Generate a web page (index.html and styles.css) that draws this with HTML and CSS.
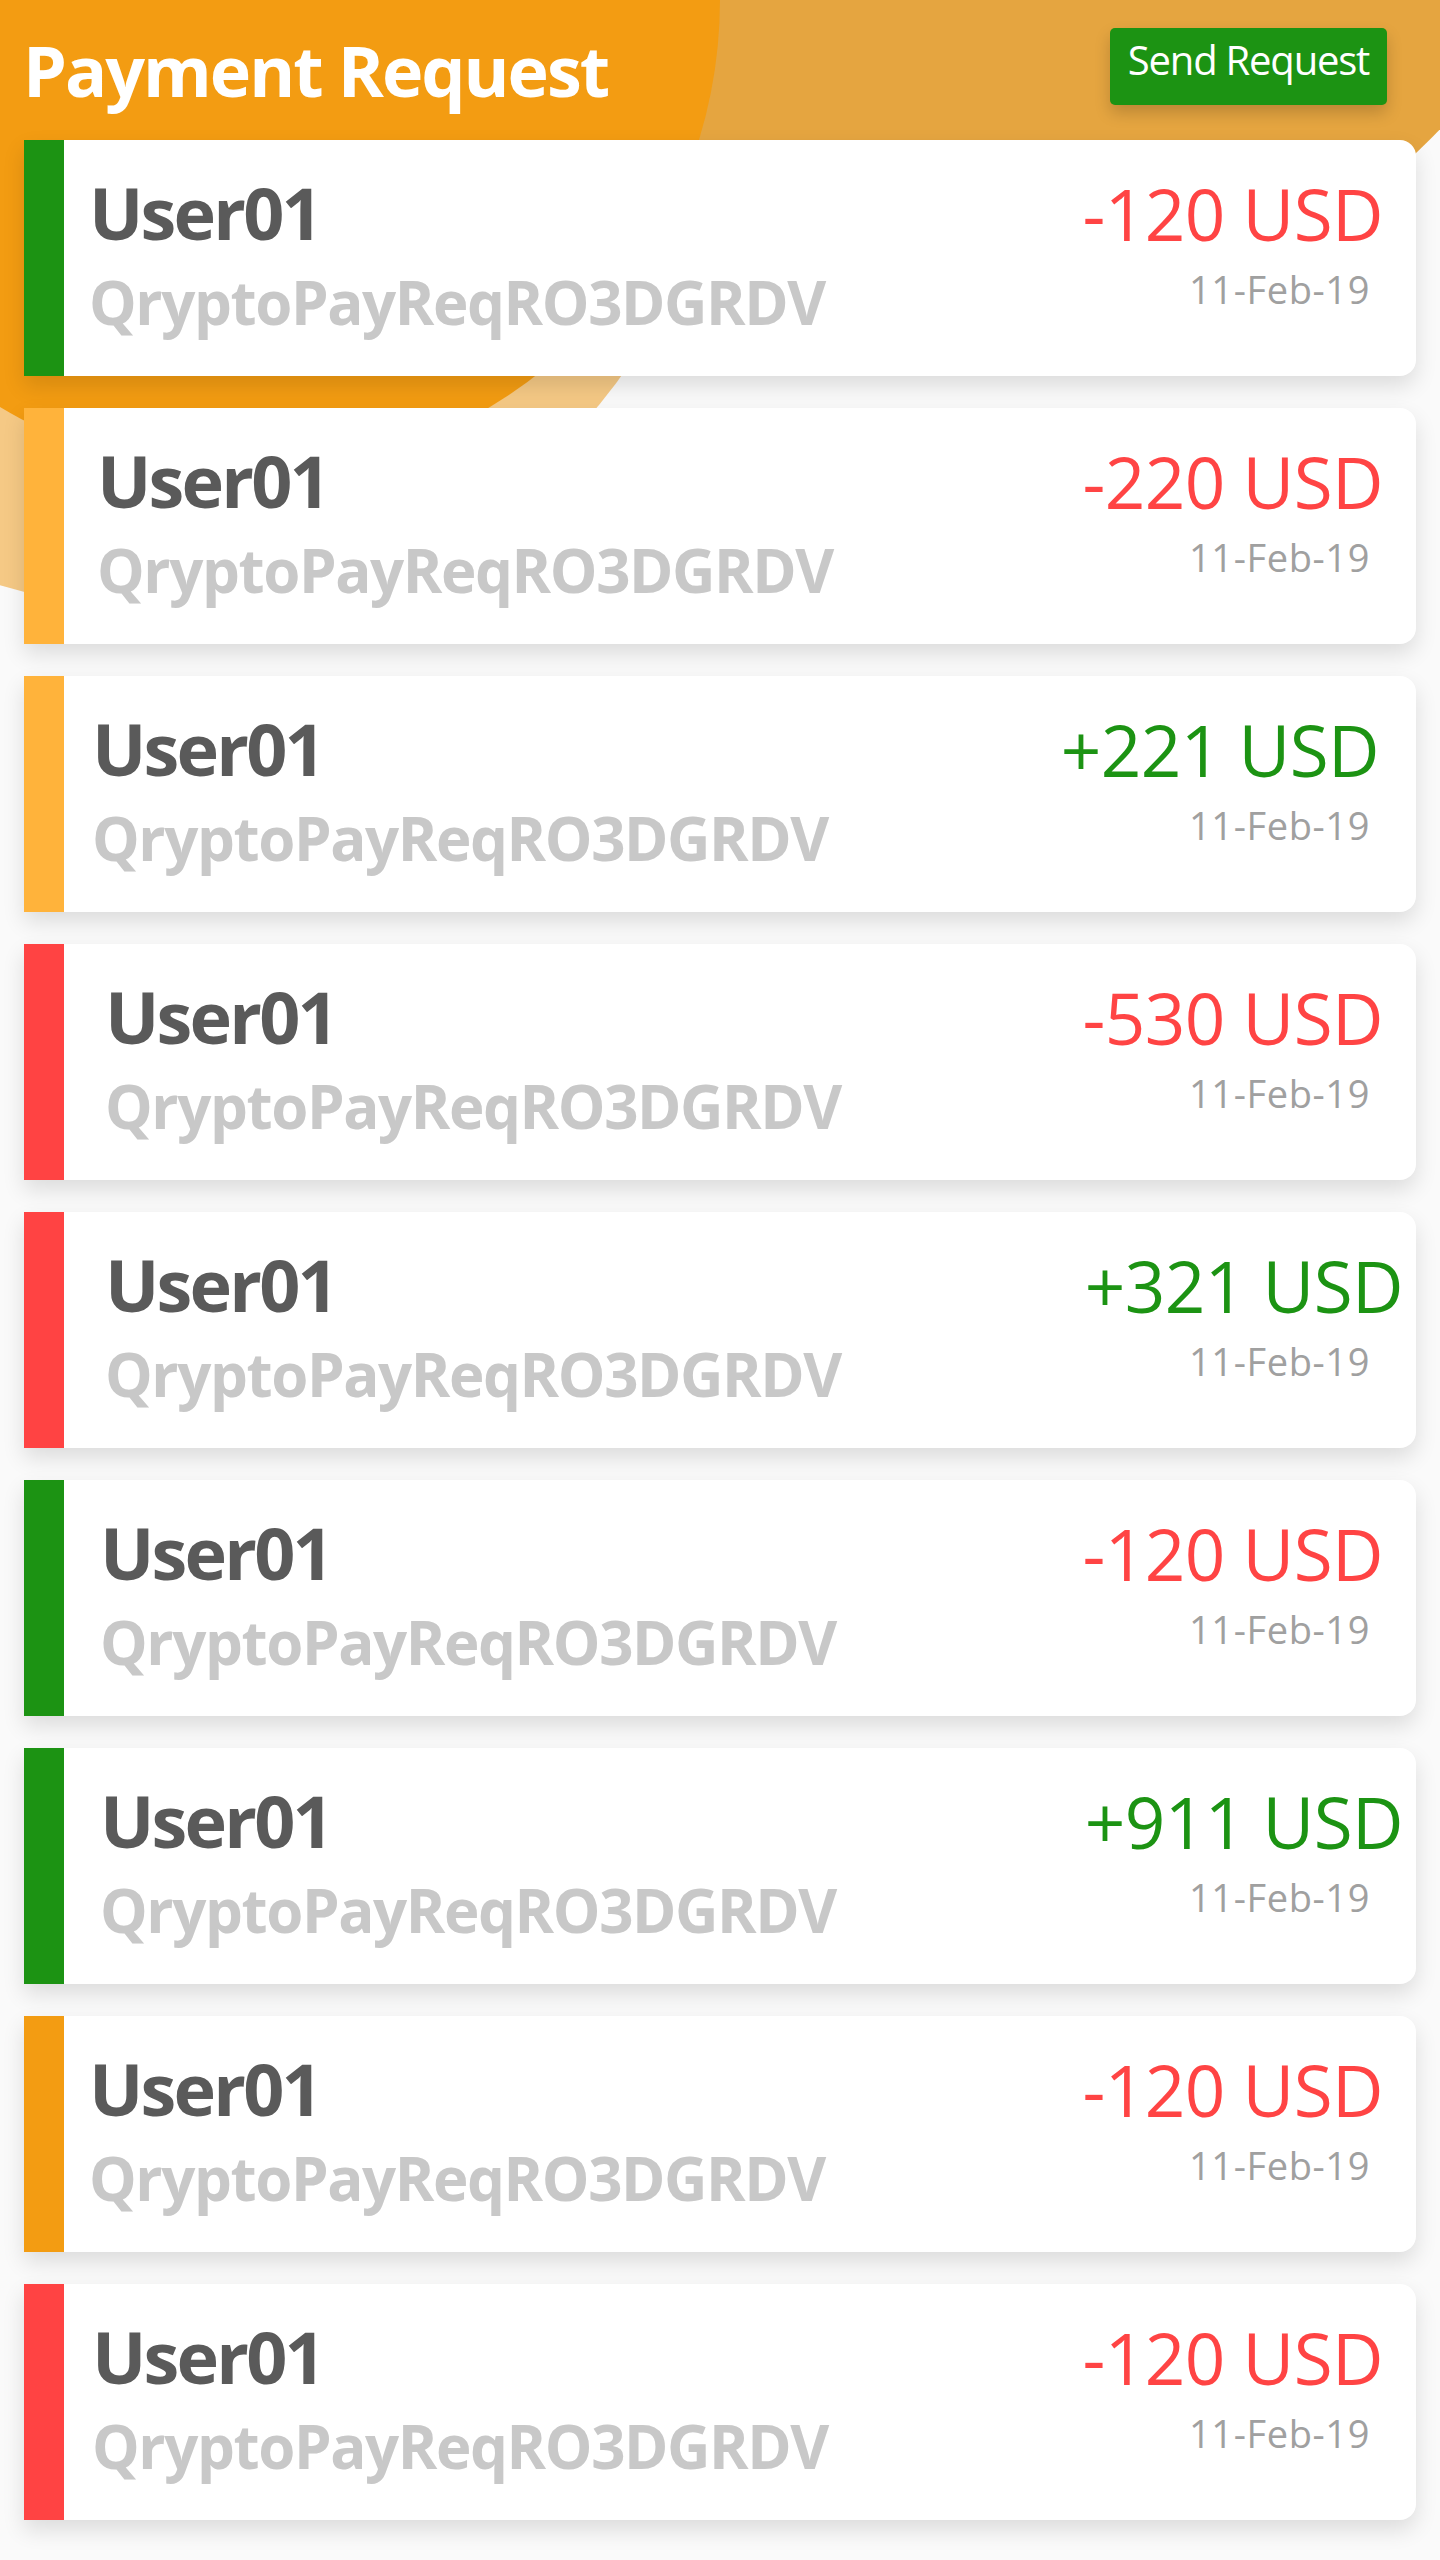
FILE: index.html
```html
<!DOCTYPE html>
<html lang="en">
<head>
<meta charset="utf-8">
<title>Payment Request</title>
<link rel="stylesheet" href="styles.css">
</head>
<body>
<div class="page">
  <div class="backdrop" aria-hidden="true">
    <div class="blob blob--pale"></div>
    <div class="blob blob--sand"></div>
    <div class="blob blob--orange"></div>
  </div>

  <header class="topbar">
    <h1 class="title">Payment Request</h1>
    <button class="send-btn" type="button">Send Request</button>
  </header>

  <main class="list">
    <article class="card">
      <div class="bar bar--green"></div>
      <div class="card-body">
        <div class="info ind-a">
          <div class="user">User01</div>
          <div class="ref">QryptoPayReqRO3DGRDV</div>
        </div>
        <div class="meta">
          <div class="amount amount--neg shift-m">-120 USD</div>
          <div class="date">11-Feb-19</div>
        </div>
      </div>
    </article>

    <article class="card">
      <div class="bar bar--amber"></div>
      <div class="card-body">
        <div class="info ind-e">
          <div class="user">User01</div>
          <div class="ref">QryptoPayReqRO3DGRDV</div>
        </div>
        <div class="meta">
          <div class="amount amount--neg shift-m">-220 USD</div>
          <div class="date">11-Feb-19</div>
        </div>
      </div>
    </article>

    <article class="card">
      <div class="bar bar--amber"></div>
      <div class="card-body">
        <div class="info ind-b">
          <div class="user">User01</div>
          <div class="ref">QryptoPayReqRO3DGRDV</div>
        </div>
        <div class="meta">
          <div class="amount amount--pos shift-s">+221 USD</div>
          <div class="date">11-Feb-19</div>
        </div>
      </div>
    </article>

    <article class="card">
      <div class="bar bar--red"></div>
      <div class="card-body">
        <div class="info ind-d">
          <div class="user">User01</div>
          <div class="ref">QryptoPayReqRO3DGRDV</div>
        </div>
        <div class="meta">
          <div class="amount amount--neg shift-m">-530 USD</div>
          <div class="date">11-Feb-19</div>
        </div>
      </div>
    </article>

    <article class="card">
      <div class="bar bar--red"></div>
      <div class="card-body">
        <div class="info ind-d">
          <div class="user">User01</div>
          <div class="ref">QryptoPayReqRO3DGRDV</div>
        </div>
        <div class="meta">
          <div class="amount amount--pos shift-l">+321 USD</div>
          <div class="date">11-Feb-19</div>
        </div>
      </div>
    </article>

    <article class="card">
      <div class="bar bar--green"></div>
      <div class="card-body">
        <div class="info ind-c">
          <div class="user">User01</div>
          <div class="ref">QryptoPayReqRO3DGRDV</div>
        </div>
        <div class="meta">
          <div class="amount amount--neg shift-m">-120 USD</div>
          <div class="date">11-Feb-19</div>
        </div>
      </div>
    </article>

    <article class="card">
      <div class="bar bar--green"></div>
      <div class="card-body">
        <div class="info ind-c">
          <div class="user">User01</div>
          <div class="ref">QryptoPayReqRO3DGRDV</div>
        </div>
        <div class="meta">
          <div class="amount amount--pos shift-l">+911 USD</div>
          <div class="date">11-Feb-19</div>
        </div>
      </div>
    </article>

    <article class="card">
      <div class="bar bar--orange"></div>
      <div class="card-body">
        <div class="info ind-a">
          <div class="user">User01</div>
          <div class="ref">QryptoPayReqRO3DGRDV</div>
        </div>
        <div class="meta">
          <div class="amount amount--neg shift-m">-120 USD</div>
          <div class="date">11-Feb-19</div>
        </div>
      </div>
    </article>

    <article class="card">
      <div class="bar bar--red"></div>
      <div class="card-body">
        <div class="info ind-b">
          <div class="user">User01</div>
          <div class="ref">QryptoPayReqRO3DGRDV</div>
        </div>
        <div class="meta">
          <div class="amount amount--neg shift-m">-120 USD</div>
          <div class="date">11-Feb-19</div>
        </div>
      </div>
    </article>
  </main>
</div>
</body>
</html>
```

FILE: styles.css
```css
* {
  box-sizing: border-box;
}

html,
body {
  margin: 0;
  padding: 0;
  background: #fafafa;
}

body {
  font-family: "Open Sans", "Noto Sans", "Liberation Sans", sans-serif;
}

.page {
  position: relative;
  width: 1440px;
  min-height: 2560px;
  overflow: hidden;
}

/* decorative background shapes */
.backdrop {
  position: absolute;
  inset: 0;
  z-index: 0;
}

.blob {
  position: absolute;
  border-radius: 50%;
}

.blob--pale {
  left: -397px;
  top: -514px;
  width: 1124px;
  height: 1124px;
  background: #f5c985;
}

.blob--sand {
  left: 64px;
  top: -1226px;
  width: 1600px;
  height: 1600px;
  background: #e5a540;
}

.blob--orange {
  left: -230px;
  top: -475px;
  width: 950px;
  height: 950px;
  background: #f39c12;
}

/* header */
.topbar {
  position: relative;
  z-index: 1;
  height: 140px;
  display: flex;
  justify-content: space-between;
  align-items: flex-start;
  padding: 28px 53px 0 23px;
}

.title {
  margin: 7px 0 0;
  font-size: 70px;
  line-height: 1;
  font-weight: 700;
  color: #ffffff;
  letter-spacing: -2px;
}

.send-btn {
  width: 277px;
  height: 77px;
  padding: 12px 0 0;
  border: 0;
  border-radius: 5px;
  background: #1c9313;
  color: #ffffff;
  font-family: inherit;
  font-size: 40px;
  line-height: 1;
  display: flex;
  justify-content: center;
  align-items: flex-start;
  letter-spacing: -1.2px;
  box-shadow: 0 8px 16px rgba(0, 0, 0, 0.18);
}

/* list of cards */
.list {
  position: relative;
  z-index: 1;
  display: flex;
  flex-direction: column;
  gap: 32px;
  padding: 0 24px;
}

.card {
  display: flex;
  height: 236px;
  background: #ffffff;
  border-radius: 0 16px 16px 0;
  box-shadow: 0 10px 22px rgba(0, 0, 0, 0.12);
}

.bar {
  width: 40px;
  flex: none;
}

.bar--green { background: #1c9313; }
.bar--amber { background: #ffb33b; }
.bar--red { background: #ff4343; }
.bar--orange { background: #f39c12; }

.card-body {
  flex: 1;
  display: flex;
  justify-content: space-between;
  padding: 36px 46px 0 0;
}

.info {
  display: flex;
  flex-direction: column;
}

.ind-a { padding-left: 25px; }
.ind-b { padding-left: 28px; }
.ind-c { padding-left: 36px; }
.ind-d { padding-left: 41px; }
.ind-e { padding-left: 33px; }

.user {
  font-size: 72px;
  line-height: 1;
  font-weight: 700;
  color: #5a5a5a;
  letter-spacing: -2.8px;
}

.ref {
  margin-top: 24px;
  font-size: 60px;
  line-height: 1;
  font-weight: 700;
  color: #c8c8c8;
  letter-spacing: -1.4px;
}

.meta {
  display: flex;
  flex-direction: column;
  align-items: flex-end;
  padding-top: 2px;
}

.amount {
  font-size: 71px;
  line-height: 1;
  font-weight: 400;
  letter-spacing: -0.6px;
}

.amount--neg { color: #ff4444; }
.amount--pos { color: #1c9313; }

.shift-s { margin-right: -9px; }
.shift-m { margin-right: -13px; }
.shift-l { margin-right: -33px; }

.date {
  margin-top: 21px;
  font-size: 38px;
  line-height: 1;
  color: #a0a0a0;
  letter-spacing: 0.6px;
}
```
